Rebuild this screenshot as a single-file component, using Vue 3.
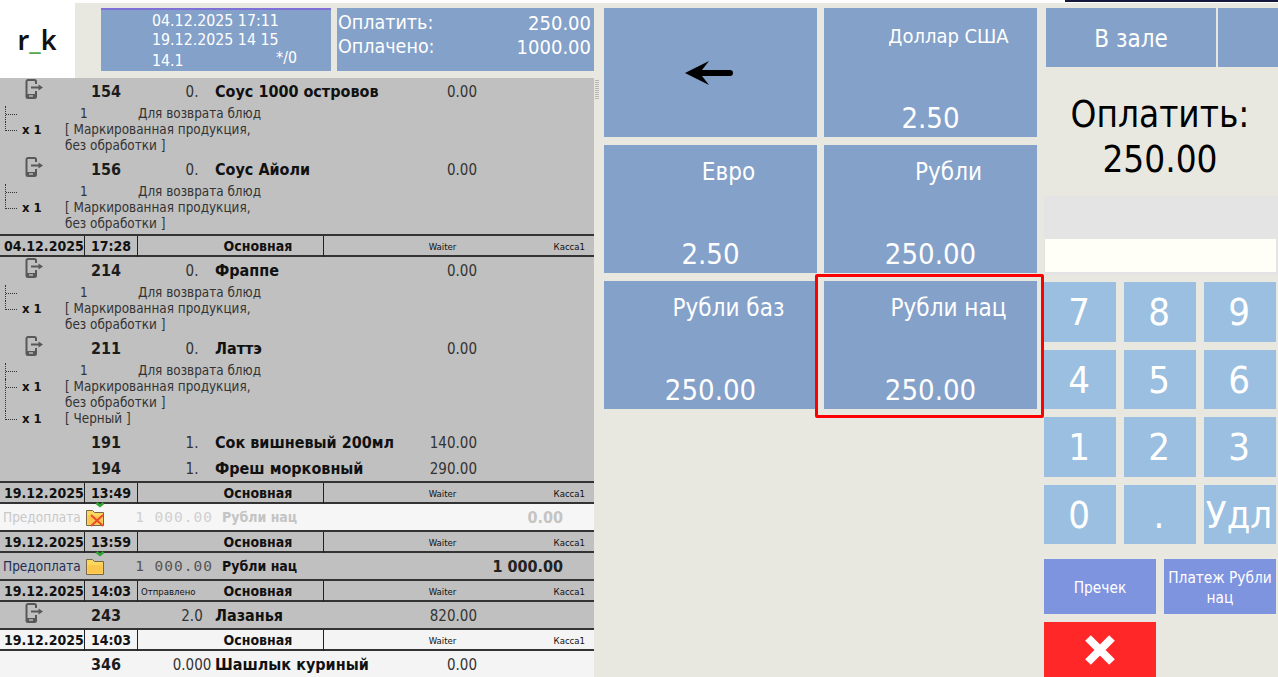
<template>
  <div class="page">
    <div class="top-strip">
      <span class="strip-text">ЗАПРОСЫ СЕРВЕРЫ СЕРВЕР СПРАВОЧНИКОВ TEST RKTEXT 1231?</span>
      <span class="strip-dark"></span>
    </div>
    <div class="main">
      <div class="left">
        <div class="head-row">
          <div class="logo">r<span class="logo-line">_</span>k</div>
          <div class="info-box">
            <div>04.12.2025 17:11</div>
            <div>19.12.2025 14 15</div>
            <div class="info-last"><span>14.1</span><span class="info-star">*/0</span></div>
          </div>
          <div class="pay-box">
            <div class="pay-line"><span class="pay-name">Оплатить:</span><span>250.00</span></div>
            <div class="pay-line"><span class="pay-name">Оплачено:</span><span>1000.00</span></div>
          </div>
        </div>
        <div class="list-wrap">
          <div class="list">
            <template v-for="(r, i) in rows" :key="i">
              <div v-if="r.t === 'dish'" class="dish" :class="{ light: r.light }">
                <span class="dish-icon">
                  <svg v-if="r.icon" width="19" height="20" viewBox="0 0 19 20">
                    <path d="M11 5V2.5A1.5 1.5 0 0 0 9.5 1H3A1.5 1.5 0 0 0 1.5 2.5V17.5A1.5 1.5 0 0 0 3 19H9.5A1.5 1.5 0 0 0 11 17.5V12" fill="none" stroke="#585858" stroke-width="2" />
                    <rect x="1.5" y="15" width="9.5" height="3.5" fill="#585858" />
                    <rect x="4" y="16.5" width="4" height="1" fill="#e8e8e8" />
                    <path d="M6 8.5H14" stroke="#585858" stroke-width="2" />
                    <path d="M13.5 5.5L18 8.5L13.5 11.5Z" fill="#585858" />
                  </svg>
                </span>
                <span class="dish-num">{{ r.num }}</span>
                <span class="dish-qty">{{ r.qty }}</span>
                <span class="dish-name">{{ r.name }}</span>
                <span class="dish-price">{{ r.price }}</span>
              </div>
              <div v-else-if="r.t === 'ret'" class="sub sub-ret">
                <span class="tree"></span>
                <span class="ret-qty">1</span>
                <span class="ret-text">Для возврата блюд</span>
              </div>
              <div v-else-if="r.t === 'mod'" class="sub sub-mod" :class="{ cont: r.cont, 'end-gap': r.end }">
                <span class="tree"></span>
                <b class="mod-x">x 1</b>
                <span class="mod-text">{{ r.text }}</span>
              </div>
              <div v-else-if="r.t === 'head'" class="order-head" :class="{ light: r.light }">
                <b class="oh-date">{{ r.date }}</b>
                <b class="oh-time">{{ r.time }}</b>
                <span class="oh-type"><small v-if="r.sent">Отправлено</small><b>Основная</b></span>
                <span class="oh-waiter">Waiter</span>
                <span class="oh-kassa">Касса1</span>
              </div>
              <div v-else class="prepay" :class="{ off: r.off }">
                <span class="pp-label">Предоплата</span>
                <svg class="pp-icon" width="20" height="25" viewBox="0 0 20 25">
                  <path d="M11.5 1L15 4L18.5 1" fill="none" stroke="#2fa52f" stroke-width="2.4" />
                  <path d="M1.5 8.5H7.5L9.5 10.5H18.5V23.5H1.5Z" fill="#fbd760" stroke="#77684a" stroke-width="1" />
                  <path d="M2.5 14H17.5V22.5H2.5Z" fill="#fcc64c" />
                  <path v-if="r.off" d="M6 13L18 24M18 13L6 24" stroke="#ea4a30" stroke-width="2" />
                </svg>
                <span class="pp-sum">1 000.00</span>
                <b class="pp-cur">Рубли нац</b>
                <b class="pp-total">{{ r.total }}</b>
              </div>
            </template>
          </div>
          <div class="scroll"><span class="scroll-grip"></span></div>
        </div>
      </div>

      <div class="tiles">
        <div class="tile tile-back">
          <svg width="48" height="24" viewBox="0 0 48 24">
            <path d="M0 12L24 0L17 9H45A3 3 0 0 1 45 15H17L24 24Z" fill="#000" />
          </svg>
        </div>
        <div v-for="t in tiles" :key="t.label" class="tile" :class="{ selected: t.selected }">
          <div class="tile-label" :class="{ small: t.small }">{{ t.label }}</div>
          <div class="tile-value">{{ t.value }}</div>
        </div>
      </div>

      <div class="right">
        <div class="hall-row">
          <div class="hall">В зале</div>
          <div class="hall hall-side"></div>
        </div>
        <div class="to-pay">Оплатить:<br />250.00</div>
        <div class="band"></div>
        <div class="input-wrap"><div class="input"></div></div>
        <div class="numpad">
          <div v-for="k in keys" :key="k" class="key">{{ k }}</div>
        </div>
        <div class="actions">
          <div class="action">Пречек</div>
          <div class="action">Платеж Рубли нац</div>
          <div class="cancel">
            <svg width="32" height="32" viewBox="0 0 32 32">
              <path d="M4 4L28 28M28 4L4 28" stroke="#fff" stroke-width="8" />
            </svg>
          </div>
        </div>
      </div>
    </div>
  </div>
</template>

<script setup>
const markText = '[ Маркированная продукция,\nбез обработки ]'

const rows = [
  { t: 'dish', icon: true, num: '154', qty: '0.', name: 'Соус 1000 островов', price: '0.00' },
  { t: 'ret' },
  { t: 'mod', text: markText, end: true },
  { t: 'dish', icon: true, num: '156', qty: '0.', name: 'Соус Айоли', price: '0.00' },
  { t: 'ret' },
  { t: 'mod', text: markText, end: true },
  { t: 'head', date: '04.12.2025', time: '17:28' },
  { t: 'dish', icon: true, num: '214', qty: '0.', name: 'Фраппе', price: '0.00' },
  { t: 'ret' },
  { t: 'mod', text: markText, end: true },
  { t: 'dish', icon: true, num: '211', qty: '0.', name: 'Латтэ', price: '0.00' },
  { t: 'ret' },
  { t: 'mod', text: markText, cont: true },
  { t: 'mod', text: '[ Черный ]', end: true },
  { t: 'dish', num: '191', qty: '1.', name: 'Сок вишневый 200мл', price: '140.00' },
  { t: 'dish', num: '194', qty: '1.', name: 'Фреш морковный', price: '290.00' },
  { t: 'head', date: '19.12.2025', time: '13:49' },
  { t: 'prepay', off: true, total: '0.00' },
  { t: 'head', date: '19.12.2025', time: '13:59' },
  { t: 'prepay', total: '1 000.00' },
  { t: 'head', date: '19.12.2025', time: '14:03', sent: true },
  { t: 'dish', icon: true, num: '243', qty: '2.0', name: 'Лазанья', price: '820.00' },
  { t: 'head', date: '19.12.2025', time: '14:03', light: true },
  { t: 'dish', light: true, num: '346', qty: '0.000', name: 'Шашлык куриный', price: '0.00' },
]

const tiles = [
  { label: 'Доллар США', value: '2.50', small: true },
  { label: 'Евро', value: '2.50' },
  { label: 'Рубли', value: '250.00' },
  { label: 'Рубли баз', value: '250.00' },
  { label: 'Рубли нац', value: '250.00', selected: true },
]

const keys = ['7', '8', '9', '4', '5', '6', '1', '2', '3', '0', '.', 'Удл']
</script>

<style>
html, body { margin: 0; overflow: hidden; }
</style>

<style scoped>
.page {
  width: 1278px;
  height: 677px;
  overflow: hidden;
  background: #e8e8e1;
  font-family: 'DejaVu Sans Condensed', 'DejaVu Sans', sans-serif;
  display: flex;
  flex-direction: column;
}

.top-strip {
  height: 3px;
  flex: none;
  background: #fff;
  display: flex;
  justify-content: space-between;
  overflow: hidden;
}
.strip-text {
  font-size: 14.5px;
  line-height: 14px;
  margin-top: -12px;
  color: #8794a6;
  white-space: nowrap;
}
.strip-dark { width: 213px; height: 2px; background: #14173a; }

.main { flex: 1; display: flex; min-height: 0; }

.left { width: 600px; flex: none; display: flex; flex-direction: column; }
.head-row { height: 75px; flex: none; display: flex; align-items: flex-start; }
.logo {
  width: 75px;
  height: 75px;
  background: #fff;
  font-family: 'Noto Sans', sans-serif;
  font-size: 27px;
  font-weight: 600;
  color: #111;
  display: flex;
  align-items: center;
  justify-content: center;
  flex: none;
  box-sizing: border-box;
  padding: 0 1px 3px 0;
}
.logo-line { color: #55a94a; }

.info-box {
  width: 230px;
  height: 63px;
  margin: 5px 0 0 26px;
  box-sizing: border-box;
  background: #84a1c9;
  border-top: 2px solid #7f70d8;
  padding: 1px 0 0 51px;
  color: #fff;
  font-size: 15.8px;
  line-height: 19px;
}
.info-last { display: flex; width: 145px; justify-content: space-between; margin-top: 2px; }
.info-star { margin-top: -3px; }

.pay-box {
  width: 257px;
  height: 63px;
  margin: 5px 0 0 6px;
  background: #84a1c9;
  color: #fff;
  font-size: 20px;
  line-height: 24px;
  padding: 3px 3px 0 1px;
  box-sizing: border-box;
}
.pay-line { display: flex; justify-content: space-between; }
.pay-name { font-size: 19.5px; }

.list-wrap { flex: 1; display: flex; min-height: 0; }
.list {
  width: 594px;
  flex: none;
  background: #c0c0c0;
  color: #222;
  font-size: 13px;
  overflow: hidden;
}
.scroll { flex: 1; background: #e8e8e1; padding: 2px 0 0 1px; }
.scroll-grip {
  display: block;
  width: 4px;
  height: 20px;
  background: repeating-linear-gradient(#b4b4b4 0 1px, #e8e8e1 1px 2px);
}

.dish {
  display: grid;
  grid-template-columns: 25px 66px 44px 80px 205px 57px;
  height: 26px;
  box-sizing: border-box;
  align-items: center;
  font-size: 15px;
  color: #1c1c1c;
}
.dish.light { background: #f4f4f4; }
.dish-icon { grid-column: 2; align-self: start; height: 20px; margin-top: 1px; }
.dish-num { grid-column: 3; font-weight: 700; font-size: 16px; }
.dish-qty { grid-column: 4; padding: 1px 0 0 34px; text-align: center; color: #333; white-space: nowrap; }
.dish-name { grid-column: 5; font-weight: 700; font-size: 16px; white-space: nowrap; color: #111; }
.dish-price { grid-column: 6; padding-top: 1px; text-align: right; color: #333; white-space: nowrap; }

.sub {
  position: relative;
  display: grid;
  line-height: 16px;
  font-size: 13.4px;
  color: #333;
}
.sub-ret { grid-template-columns: 80px 58px 1fr; margin-top: 2px; }
.sub-mod { grid-template-columns: 22px 43px 1fr; }
.end-gap { margin-bottom: 2px; }
.mod-x { grid-column: 2; font-size: 13px; color: #111; }
.mod-text { white-space: pre-line; grid-column: 3; }
.ret-qty { grid-column: 2; }
.ret-text { grid-column: 3; }
.tree {
  position: absolute;
  left: 5px;
  top: 0;
  width: 11px;
  height: 8px;
  border-left: 1px dotted #333;
  border-bottom: 1px dotted #333;
}
.cont .tree, .sub-ret .tree { height: 100%; border-bottom: none; }
.cont .tree::after, .sub-ret .tree::after {
  content: '';
  display: block;
  height: 8px;
  border-bottom: 1px dotted #333;
}

.order-head {
  height: 23px;
  box-sizing: border-box;
  border-top: 2px solid #333;
  border-bottom: 2px solid #333;
  display: grid;
  grid-template-columns: 85px 53px 186px 1fr 100px 9px;
  align-items: stretch;
  font-size: 14px;
  line-height: 21px;
  color: #111;
}
.order-head.light { background: #f4f4f4; }
.order-head > * { border-right: 1px solid #222; }
.oh-date { padding-left: 4px; white-space: nowrap; }
.oh-time { text-align: center; }
.oh-type { display: flex; position: relative; justify-content: center; padding-left: 55px; }
.oh-type small { position: absolute; left: 3px; font-size: 9.5px; }
.oh-waiter, .oh-kassa { border-right: none; font-size: 9.5px; }
.oh-waiter { text-align: center; padding-left: 76px; }
.oh-kassa { text-align: right; }

.prepay {
  height: 26px;
  box-sizing: border-box;
  display: flex;
  align-items: center;
  color: #1f2d55;
  font-size: 13.5px;
}
.prepay.off { background: #f6f6f6; color: #c8c8c8; }
.pp-label { width: 85px; padding-left: 3px; box-sizing: border-box; }
.pp-icon { margin-top: -6px; width: 20px; flex: none; }
.pp-sum {
  width: 105px;
  margin-left: 3px;
  text-align: right;
  font-family: 'DejaVu Sans Mono', monospace;
  font-size: 14.5px;
  letter-spacing: 1px;
  color: #555;
  white-space: nowrap;
}
.off .pp-sum { color: #cfcfcf; }
.pp-cur { margin-left: 9px; width: 190px; font-size: 14px; color: #111; }
.off .pp-cur { color: #c4c4c4; }
.pp-total { width: 151px; text-align: right; font-size: 16px; color: #222; }
.off .pp-total { color: #c4c4c4; }

.tiles {
  width: 444px;
  box-sizing: border-box;
  padding: 5px 0 0 4px;
  display: grid;
  grid-template-columns: 213px 213px;
  grid-template-rows: 129px 128px 128px;
  gap: 8px 7px;
  flex: none;
  align-content: start;
}
.tile {
  position: relative;
  background: #84a1c9;
  color: #fff;
  display: flex;
  flex-direction: column;
  align-items: center;
  justify-content: space-between;
  padding: 14px 0 0;
  box-sizing: border-box;
}
.tile:nth-child(2) { padding-top: 15px; }
.tile-back { justify-content: center; align-items: flex-start; padding: 0 0 0 81px; }
.tile-label { font-size: 24px; line-height: 26px; padding-left: 36px; white-space: nowrap; }
.tile-label.small { font-size: 20px; }
.tile-value { font-size: 29px; line-height: 38px; }
.selected::after {
  content: '';
  position: absolute;
  inset: -7px -7px -9px -9px;
  border: 3px solid #f00;
  border-radius: 2px;
}

.right { flex: 1; min-width: 0; padding-top: 5px; display: flex; flex-direction: column; }
.hall-row { display: flex; gap: 2px; margin-left: 2px; height: 59px; flex: none; }
.hall {
  width: 170px;
  background: #84a1c9;
  color: #fff;
  font-size: 24px;
  padding-top: 3px;
  box-sizing: border-box;
  display: flex;
  align-items: center;
  justify-content: center;
}
.hall-side { flex: 1; }
.to-pay {
  height: 129px;
  flex: none;
  box-sizing: border-box;
  padding: 25px 2px 0 0;
  text-align: center;
  font-size: 36.6px;
  line-height: 45px;
  color: #000;
}
.band { height: 39px; flex: none; background: #e4e4e4; }
.input-wrap { height: 40px; flex: none; background: #e4e4e4; box-sizing: border-box; padding: 4px 2px 3px 1px; }
.input { height: 33px; background: #fffff7; }

.numpad {
  margin-top: 7px;
  display: grid;
  grid-template-columns: 72px 72px 72px;
  grid-auto-rows: 59.5px;
  gap: 8px;
  flex: none;
}
.key {
  background: #9bbfe0;
  color: #fff;
  font-size: 38px;
  padding: 1px 2px 0 0;
  box-sizing: border-box;
  display: flex;
  align-items: center;
  justify-content: center;
}
.actions {
  margin-top: 15px;
  display: grid;
  grid-template-columns: 112px 112px;
  grid-auto-rows: 55px;
  gap: 8px;
}
.action {
  background: #7f94df;
  color: #fff;
  font-size: 15.3px;
  line-height: 20px;
  padding-top: 2px;
  box-sizing: border-box;
  text-align: center;
  display: flex;
  align-items: center;
  justify-content: center;
}
.cancel {
  background: #ff2727;
  display: flex;
  align-items: center;
  justify-content: center;
}
</style>
